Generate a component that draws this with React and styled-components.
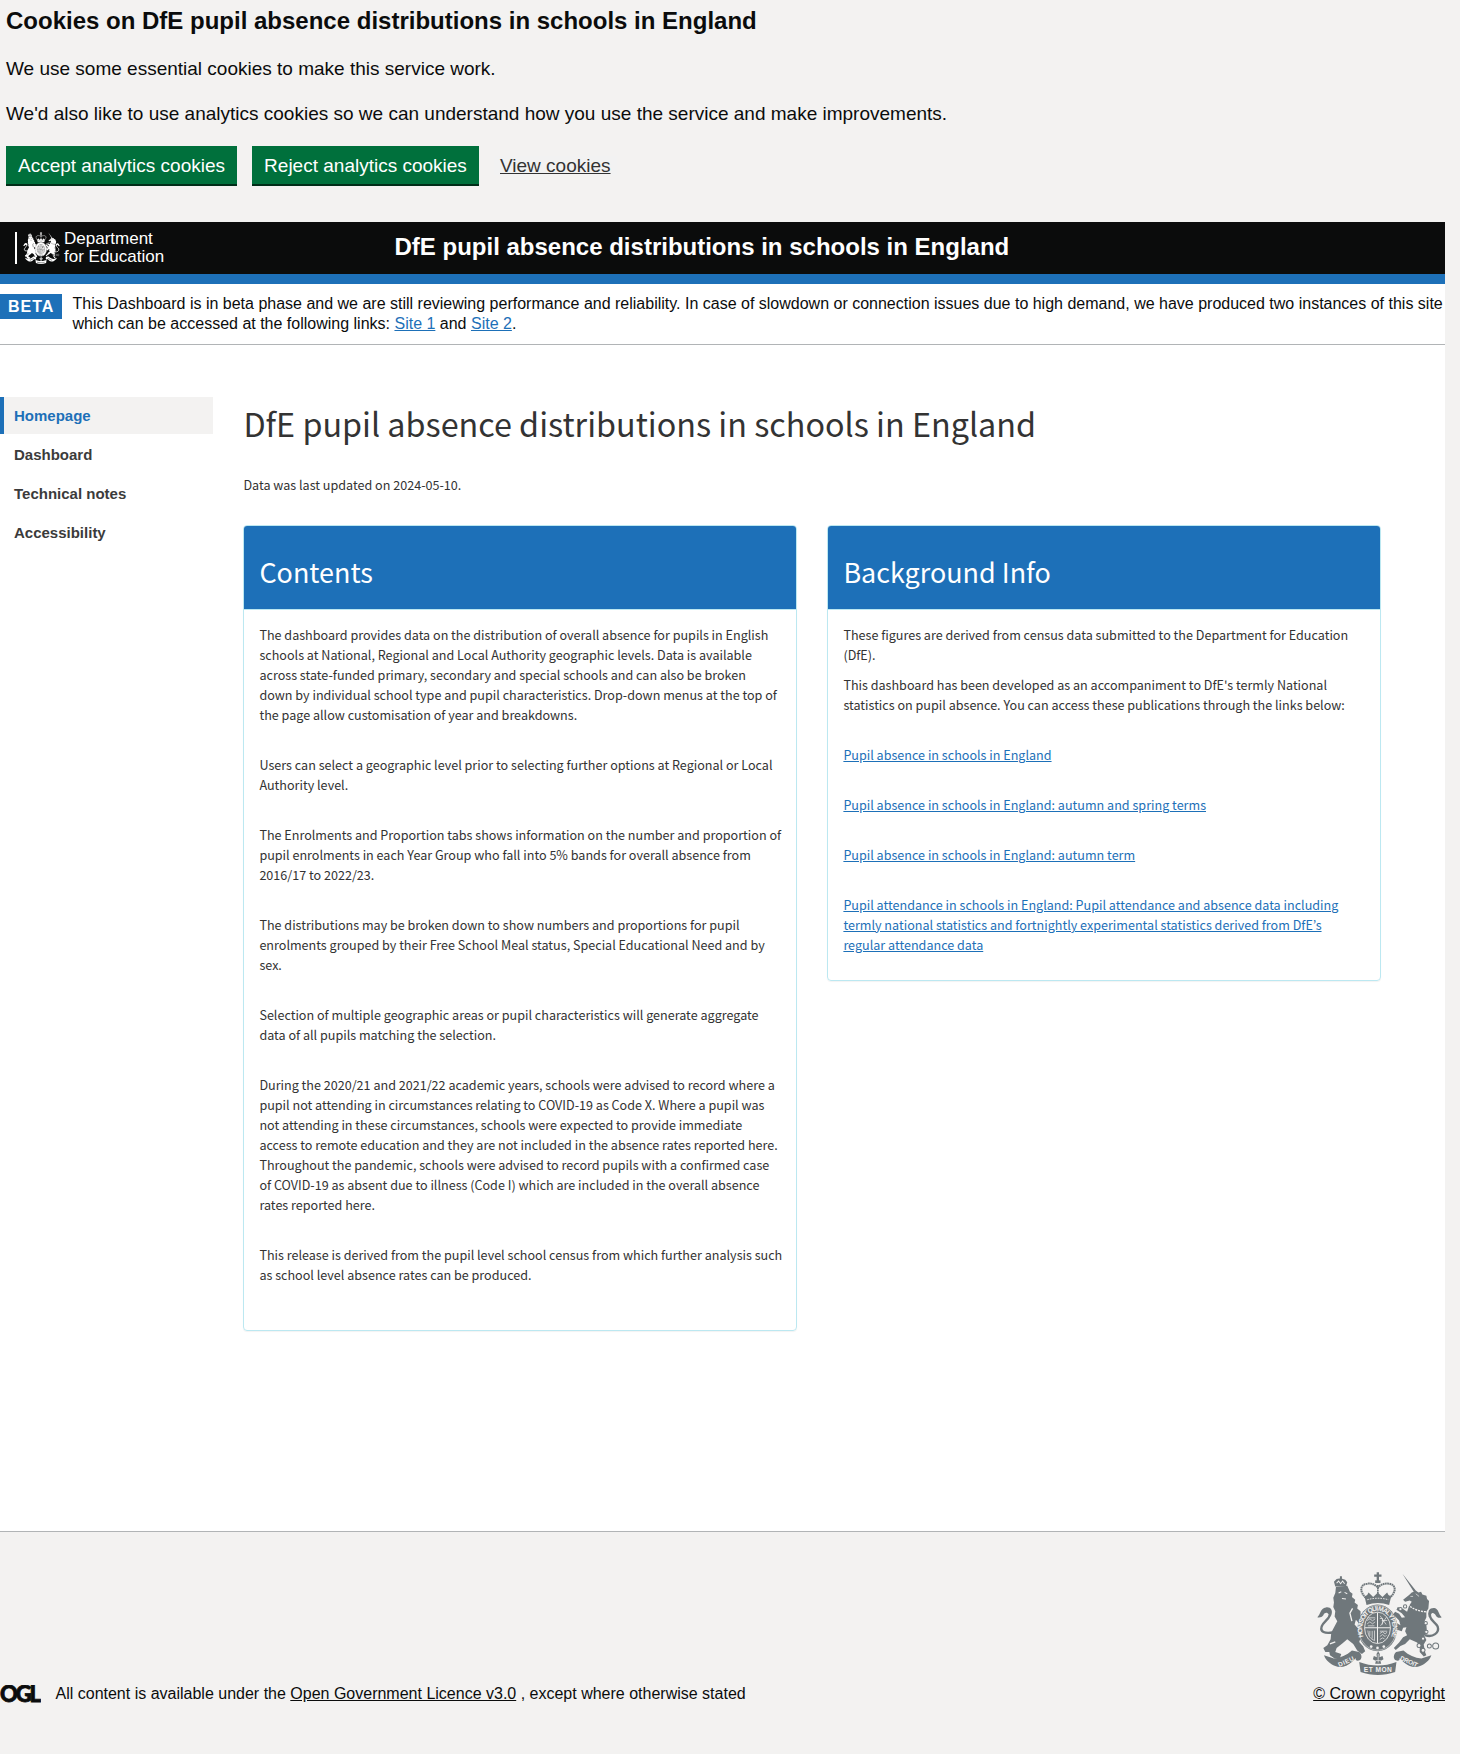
import React from "react";
import styled, { createGlobalStyle } from "styled-components";

const ARIAL = `"Liberation Sans", Arial, sans-serif`;
const SOURCE = `"Source Sans Pro", "Noto Sans CJK KR", sans-serif`;
const BLUE = "#1d70b8";
const INK = "#0b0c0c";
const GREY = "#f3f2f1";
const RULE = "#b1b4b6";

const GlobalStyle = createGlobalStyle`
  *, *::before, *::after { box-sizing: border-box; }
  html { background: ${GREY}; }
  body { margin: 0; background: ${GREY}; font-family: ${ARIAL}; color: ${INK}; }
  h1, h2, p, ul { margin: 0; padding: 0; font-weight: 400; }
`;

/* Cookie banner */
const CookieBanner = styled.section`
  height: 222px;
  padding: 7px 6px 0;
`;
const CookieHeading = styled.h2`
  font-size: 24px;
  line-height: 28px;
  && { font-weight: 700; }
`;
const CookieText = styled.p`
  font-size: 19px;
  line-height: 25px;
  && { margin-top: ${(p) => p.$gap}px; }
`;
const CookieActions = styled.div`
  display: flex;
  align-items: flex-start;
  margin-top: 20px;
`;
const CookieButton = styled.button`
  width: ${(p) => p.$width}px;
  height: 38px;
  margin: 0 15px 0 0;
  padding: 1px 0 0;
  border: 0;
  background: #00703c;
  box-shadow: 0 2px 0 #002d18;
  color: #fff;
  font-family: ${ARIAL};
  font-size: 19px;
  line-height: 19px;
  white-space: nowrap;
`;
const CookieLink = styled.a`
  margin-top: 10px;
  padding: 0 6px;
  background: #f2f2f2;
  color: #333;
  font-size: 19px;
  line-height: 19px;
  text-decoration: underline;
`;

/* Page */
const Page = styled.div`
  width: 1445px;
  background: #fff;
`;
const Header = styled.header`
  display: flex;
  height: 62px;
  padding-left: 15px;
  background: ${INK};
  border-bottom: 10px solid ${BLUE};
`;
const Brand = styled.div`
  display: flex;
  width: 379.5px;
  padding-top: 10px;
`;
const BrandBar = styled.span`
  width: 2px;
  height: 32px;
  margin-right: 6px;
  background: #fff;
`;
const BrandName = styled.span`
  margin: -2px 0 0 4px;
  color: #fff;
  font-size: 17px;
  line-height: 18.4px;
`;
const HeaderTitle = styled.span`
  padding-top: 11px;
  color: #fff;
  font-size: 24px;
  font-weight: 700;
  line-height: 28px;
`;

const Phase = styled.div`
  display: flex;
  align-items: flex-start;
  height: 61px;
  padding-top: 10px;
  border-bottom: 1px solid ${RULE};
`;
const PhaseTag = styled.strong`
  width: 62px;
  height: 25px;
  margin-right: 10.5px;
  padding-left: 8px;
  background: ${BLUE};
  color: #fff;
  font-size: 16px;
  line-height: 25px;
  letter-spacing: 1px;
`;
const PhaseText = styled.p`
  flex: 1;
  font-size: 16px;
  line-height: 20px;
`;
const Link = styled.a`
  color: ${BLUE};
  text-decoration: underline;
`;

const Body = styled.div`
  display: flex;
  height: 1186px;
  padding-top: 52px;
`;
const Nav = styled.nav`
  display: flex;
  flex-direction: column;
  gap: 2px;
  width: 213px;
  margin-right: 30.4px;
`;
const NavItem = styled.a`
  height: 37px;
  padding-left: 10px;
  border-left: 4px solid ${(p) => (p.$active ? BLUE : "transparent")};
  background: ${(p) => (p.$active ? GREY : "transparent")};
  color: ${(p) => (p.$active ? BLUE : "#3b3b3b")};
  font-size: 15px;
  font-weight: 700;
  line-height: 37px;
`;
const Main = styled.main`
  width: 1138px;
  color: #333;
  font-family: ${SOURCE};
  font-size: 12.58px;
  line-height: 20px;
`;
const Title = styled.h1`
  && { padding: 6px 0 1px; }
  font-size: 32.32px;
  line-height: 40px;
`;
const Updated = styled.p`
  && { margin: 31px 0 30px; }
`;
const Cards = styled.div`
  display: grid;
  grid-template-columns: 553.4px 553.4px;
  column-gap: 30.6px;
  align-items: start;
`;
const Card = styled.section`
  border: 1px solid #bce8f1;
  border-radius: 4px;
  overflow: hidden;
  box-shadow: 0 1px 1px rgba(0, 0, 0, 0.05);
`;
const CardHeading = styled.h2`
  height: 84px;
  && { padding: 29px 15px 0; }
  border-bottom: 1px solid #bce8f1;
  background: ${BLUE};
  color: #fff;
  font-size: 26.95px;
  line-height: 33px;
`;
const CardBody = styled.div`
  display: flex;
  flex-direction: column;
  gap: 30px;
  padding: 15px ${(p) => p.$right}px ${(p) => p.$bottom}px 15px;
  white-space: pre-line;
`;
const Intro = styled.div`
  display: flex;
  flex-direction: column;
  gap: 10px;
`;

/* Footer */
const Footer = styled.footer`
  display: flex;
  justify-content: space-between;
  align-items: flex-end;
  width: 1445px;
  height: 173px;
  border-top: 1px solid ${RULE};
  font-size: 16px;
  line-height: 20px;
`;
const Licence = styled.div`
  display: flex;
  align-items: center;
`;
const FooterLink = styled.a`
  color: ${INK};
  text-decoration: underline;
`;
const Copyright = styled.div`
  display: flex;
  flex-direction: column;
  align-items: center;
  gap: 9px;
`;
const LicenceText = styled.span`
  margin-left: 14.5px;
`;

const RIBBON_SIDE =
  "M42 272 L72 282 C92 280 110 272 126 258 L148 262 C157 270 157 283 149 287 C141 290 135 286 138 280 L126 292 C112 304 92 312 76 304 C60 298 48 288 42 272 Z";

function Crest({ width, height, color, ground, motto }) {
  const letters = {
    fill: ground,
    fontFamily: "Liberation Sans",
    fontWeight: 700,
    textAnchor: "middle",
  };
  return (
    <svg width={width} height={height} viewBox="21 23 376 308" preserveAspectRatio="none" aria-hidden="true">
      <defs>
        <path id="garter" d="M166 225 A46 54 0 1 1 240 225" />
      </defs>
      {/* lion */}
      <path
        fill={color}
        d="M78 68 L112 64 L120 82 L128 88 L126 98 L136 106 L134 114 L144 122 L142 132 L152 140 L152 158 L160 172 L150 180 L138 166 L134 180 L148 196 L154 214 L148 232 L160 246 L166 260 L156 268 L142 258 L130 238 L112 224 L98 236 L80 250 L76 262 L94 268 L90 280 L74 282 L60 272 L58 262 L46 262 L40 250 L52 242 L62 224 L64 204 L82 170 L74 156 L76 140 L70 128 L72 114 L70 100 L76 86 Z"
      />
      <path fill="none" stroke={color} strokeWidth="7" d="M68 204 C44 208 30 202 35 186 C40 172 54 168 60 152" />
      <path fill={color} d="M22 158 C32 150 30 132 48 129 C62 127 70 138 64 152 C60 158 54 158 56 150 C52 142 44 144 40 152 C36 158 28 160 22 158 Z" />
      <path fill={color} d="M76 66 L72 52 L80 44 L92 42 L106 46 L112 54 L108 66 Z M90 36h6v8h-6z" />
      <path stroke={ground} strokeWidth="3" fill="none" d="M80 56 L86 50 L92 58 L98 50 L104 58 M86 86 L94 82 M104 84 L112 88 M96 102 L108 104" />
      <path stroke={ground} strokeWidth="4" fill="none" d="M128 132 L120 146 L126 170 M60 238 L76 232" />
      {/* unicorn */}
      <path
        fill={color}
        d="M278 28 L318 78 L326 84 L334 82 L338 90 L350 94 L352 104 L358 110 L356 132 L350 142 L350 158 L344 172 L350 182 C352 198 352 206 344 214 L350 226 L342 240 L346 262 L350 272 L342 276 L330 262 L330 244 L322 234 L300 224 L286 238 L272 244 L258 256 L252 250 L268 234 L280 218 L292 212 L286 200 L290 188 L280 190 L276 200 L262 196 L254 182 L262 176 L272 182 L268 168 L260 160 L250 150 L256 142 L268 148 L276 160 L286 158 L276 146 L260 136 L264 128 L280 134 L292 142 L298 124 L306 112 L300 108 L286 112 L280 106 L298 92 L306 84 L312 82 Z"
      />
      <path fill="none" stroke={color} strokeWidth="7" d="M346 212 C370 220 390 204 384 186 C378 174 364 170 360 154" />
      <path fill={color} d="M396 158 C386 150 388 134 374 131 C360 130 352 140 357 156 C362 162 366 158 364 150 C368 142 374 146 378 152 C382 160 390 161 396 158 Z" />
      <path stroke={ground} strokeWidth="4" fill="none" strokeDasharray="6 3" d="M294 120 C314 138 334 142 356 142" />
      <g fill={ground} stroke={color} strokeWidth="3">
        <circle cx="286" cy="126" r="5" /><circle cx="272" cy="134" r="5" /><circle cx="348" cy="176" r="5" />
        <circle cx="350" cy="202" r="5" /><circle cx="340" cy="222" r="5" /><circle cx="328" cy="243" r="6" />
        <circle cx="340" cy="257" r="6" /><circle cx="359" cy="244" r="6" /><circle cx="378" cy="244" r="9" />
      </g>
      <path stroke={ground} strokeWidth="2" fill="none" d="M302 96 L310 96 M318 88 L328 96" />
      {/* crown */}
      <g fill="none" stroke={color}>
        <path strokeWidth="6" strokeDasharray="5 1.5" d="M168 100 C148 82 150 60 172 58 C188 56 198 62 204 70 C210 62 222 56 238 58 C260 62 260 82 240 100" />
        <path strokeWidth="5" strokeDasharray="5 1.5" d="M204 62 V98" />
        <path strokeWidth="7" d="M204 24 V56 M193 34 H215" />
      </g>
      <path fill={color} d="M164 96 L172 92 L176 84 L184 92 L190 98 L198 90 L204 84 L210 90 L218 98 L224 92 L232 84 L236 92 L244 96 L238 122 C216 114 192 114 170 122 Z" />
      <path fill={color} d="M196 48 h16 v8 h-16z" />
      <path stroke={ground} strokeWidth="2.5" fill="none" strokeDasharray="5 3" d="M172 106 C192 100 216 100 236 106" />
      {/* garter and shield */}
      <ellipse cx="203" cy="190" rx="60" ry="70" fill={color} />
      <ellipse cx="203" cy="190" rx="57" ry="67" fill="none" stroke={ground} strokeWidth="1.5" />
      <ellipse cx="203" cy="190" rx="39" ry="47" fill={color} stroke={ground} strokeWidth="2.5" />
      <g fill="none" stroke={ground} strokeWidth="2">
        <path strokeWidth="3" d="M203 144 V236 M165 190 H241" />
        <path d="M174 160 h22 M172 168 l8 -5 l8 6 l8 -6 M172 178 l8 -6 l8 6 l8 -6 M174 184 h20" />
        <path d="M211 154 l18 26 M230 158 l-18 26 M216 168 h16 M210 162 h8 v18" />
        <path d="M174 198 C176 218 182 222 194 228 V198 M180 199 V214 M187 199 V222" />
        <path d="M210 200 h22 M210 207 l8 -5 l8 6 l6 -5 M210 216 l8 -6 l8 6 l4 -4 M210 225 l8 -5 l6 3" />
      </g>
      <g fill={ground}>
        <circle cx="184" cy="246" r="4" /><circle cx="203" cy="250" r="4" /><circle cx="222" cy="246" r="4" />
      </g>
      {motto && (
        <text {...letters} fontSize="20">
          <textPath href="#garter" startOffset="50%" textLength="205">HONI SOIT QUI MAL Y PENSE</textPath>
        </text>
      )}
      {/* ribbon */}
      <path fill={color} d={RIBBON_SIDE} />
      <path fill={color} d={RIBBON_SIDE} transform="translate(407 0) scale(-1 1)" />
      <path fill={color} d="M148 292 C186 306 222 306 260 292 L256 322 C222 334 186 334 152 322 Z" />
      <path fill={ground} d="M184 262 H226 V299 H184 Z" />
      <path fill={color} d="M200 268 L205 260 L210 268 L209 278 L218 274 L221 284 L212 289 L214 297 L196 297 L198 289 L189 284 L192 274 L201 278 Z" />
      <path fill="none" stroke={ground} strokeWidth="2" d="M205 268 V294 M197 288 H213" />
      {motto ? (
        <>
          <text {...letters} fontSize="19" transform="translate(111 297) rotate(-24)" textLength="50">DIEU</text>
          <text {...letters} fontSize="20" x="204" y="323" textLength="84">ET MON</text>
          <text {...letters} fontSize="19" transform="translate(295 297) rotate(24)" textLength="56">DROIT</text>
        </>
      ) : (
        <path fill="none" stroke={ground} strokeWidth="8" strokeDasharray="6 5" d="M92 296 L132 276 M166 314 C190 320 216 320 242 314 M274 276 L316 296" />
      )}
    </svg>
  );
}

function OglLogo() {
  return (
    <svg width="41" height="18" viewBox="0 0 41 18" role="img" aria-label="Open Government Licence">
      <text
        x="0"
        y="17"
        fill={INK}
        stroke={INK}
        strokeWidth="0.8"
        fontFamily="Lato"
        fontWeight="900"
        fontSize="22"
        textLength="41"
      >
        OGL
      </text>
    </svg>
  );
}

const navItems = ["Homepage", "Dashboard", "Technical notes", "Accessibility"];

const contents = [
  "The dashboard provides data on the distribution of overall absence for pupils in English schools at National, Regional and Local Authority geographic levels. Data is available across state-funded primary, secondary and special schools and can also be broken\ndown by individual school type and pupil characteristics. Drop-down menus at the top of the page allow customisation of year and breakdowns.",
  "Users can select a geographic level prior to selecting further options at Regional or Local Authority level.",
  "The Enrolments and Proportion tabs shows information on the number and proportion of pupil enrolments in each Year Group who fall into 5% bands for overall absence from 2016/17 to 2022/23.",
  "The distributions may be broken down to show numbers and proportions for pupil enrolments grouped by their Free School Meal status, Special Educational Need and by sex.",
  "Selection of multiple geographic areas or pupil characteristics will generate aggregate data of all pupils matching the selection.",
  "During the 2020/21 and 2021/22 academic years, schools were advised to record where a pupil not attending in circumstances relating to COVID-19 as Code X. Where a pupil was not attending in these circumstances, schools were expected to provide immediate access to remote education and they are not included in the absence rates reported here. Throughout the pandemic, schools were advised to record pupils with a confirmed case of COVID-19 as absent due to illness (Code I) which are included in the overall absence rates reported here.",
  "This release is derived from the pupil level school census from which further analysis such as school level absence rates can be produced.",
];

const publications = [
  "Pupil absence in schools in England",
  "Pupil absence in schools in England: autumn and spring terms",
  "Pupil absence in schools in England: autumn term",
  "Pupil attendance in schools in England: Pupil attendance and absence data including termly national statistics and fortnightly experimental statistics derived from DfE’s regular attendance data",
];

export default function App() {
  return (
    <>
      <GlobalStyle />
      <CookieBanner>
        <CookieHeading>Cookies on DfE pupil absence distributions in schools in England</CookieHeading>
        <CookieText $gap={21}>We use some essential cookies to make this service work.</CookieText>
        <CookieText $gap={20}>
          We'd also like to use analytics cookies so we can understand how you use the service and make improvements.
        </CookieText>
        <CookieActions>
          <CookieButton $width={231}>Accept analytics cookies</CookieButton>
          <CookieButton $width={227}>Reject analytics cookies</CookieButton>
          <CookieLink>View cookies</CookieLink>
        </CookieActions>
      </CookieBanner>

      <Page>
        <Header>
          <Brand>
            <BrandBar />
            <Crest width={37} height={32} color="#fff" ground={INK} />
            <BrandName>
              Department
              <br />
              for Education
            </BrandName>
          </Brand>
          <HeaderTitle>DfE pupil absence distributions in schools in England</HeaderTitle>
        </Header>
        <Phase>
          <PhaseTag>BETA</PhaseTag>
          <PhaseText>
            This Dashboard is in beta phase and we are still reviewing performance and reliability. In case of slowdown
            or connection issues due to high demand, we have produced two instances of this site which can be accessed
            at the following links: <Link>Site 1</Link> and <Link>Site 2</Link>.
          </PhaseText>
        </Phase>
        <Body>
          <Nav>
            {navItems.map((label, i) => (
              <NavItem key={label} $active={i === 0}>
                {label}
              </NavItem>
            ))}
          </Nav>
          <Main>
            <Title>DfE pupil absence distributions in schools in England</Title>
            <Updated>Data was last updated on 2024-05-10.</Updated>
            <Cards>
              <Card>
                <CardHeading>Contents</CardHeading>
                <CardBody $right={13} $bottom={45}>
                  {contents.map((text) => (
                    <p key={text}>{text}</p>
                  ))}
                </CardBody>
              </Card>
              <Card>
                <CardHeading>Background Info</CardHeading>
                <CardBody $right={15} $bottom={25}>
                  <Intro>
                    <p>These figures are derived from census data submitted to the Department for Education (DfE).</p>
                    <p>
                      This dashboard has been developed as an accompaniment to DfE's termly National statistics on
                      pupil absence. You can access these publications through the links below:
                    </p>
                  </Intro>
                  {publications.map((text) => (
                    <p key={text}>
                      <Link>{text}</Link>
                    </p>
                  ))}
                </CardBody>
              </Card>
            </Cards>
          </Main>
        </Body>
      </Page>

      <Footer>
        <Licence>
          <OglLogo />
          <LicenceText>
            All content is available under the <FooterLink>Open Government Licence v3.0</FooterLink> , except where
            otherwise stated
          </LicenceText>
        </Licence>
        <Copyright>
          <Crest width={125} height={103} color="#6f777b" ground={GREY} motto />
          <FooterLink>© Crown copyright</FooterLink>
        </Copyright>
      </Footer>
    </>
  );
}
